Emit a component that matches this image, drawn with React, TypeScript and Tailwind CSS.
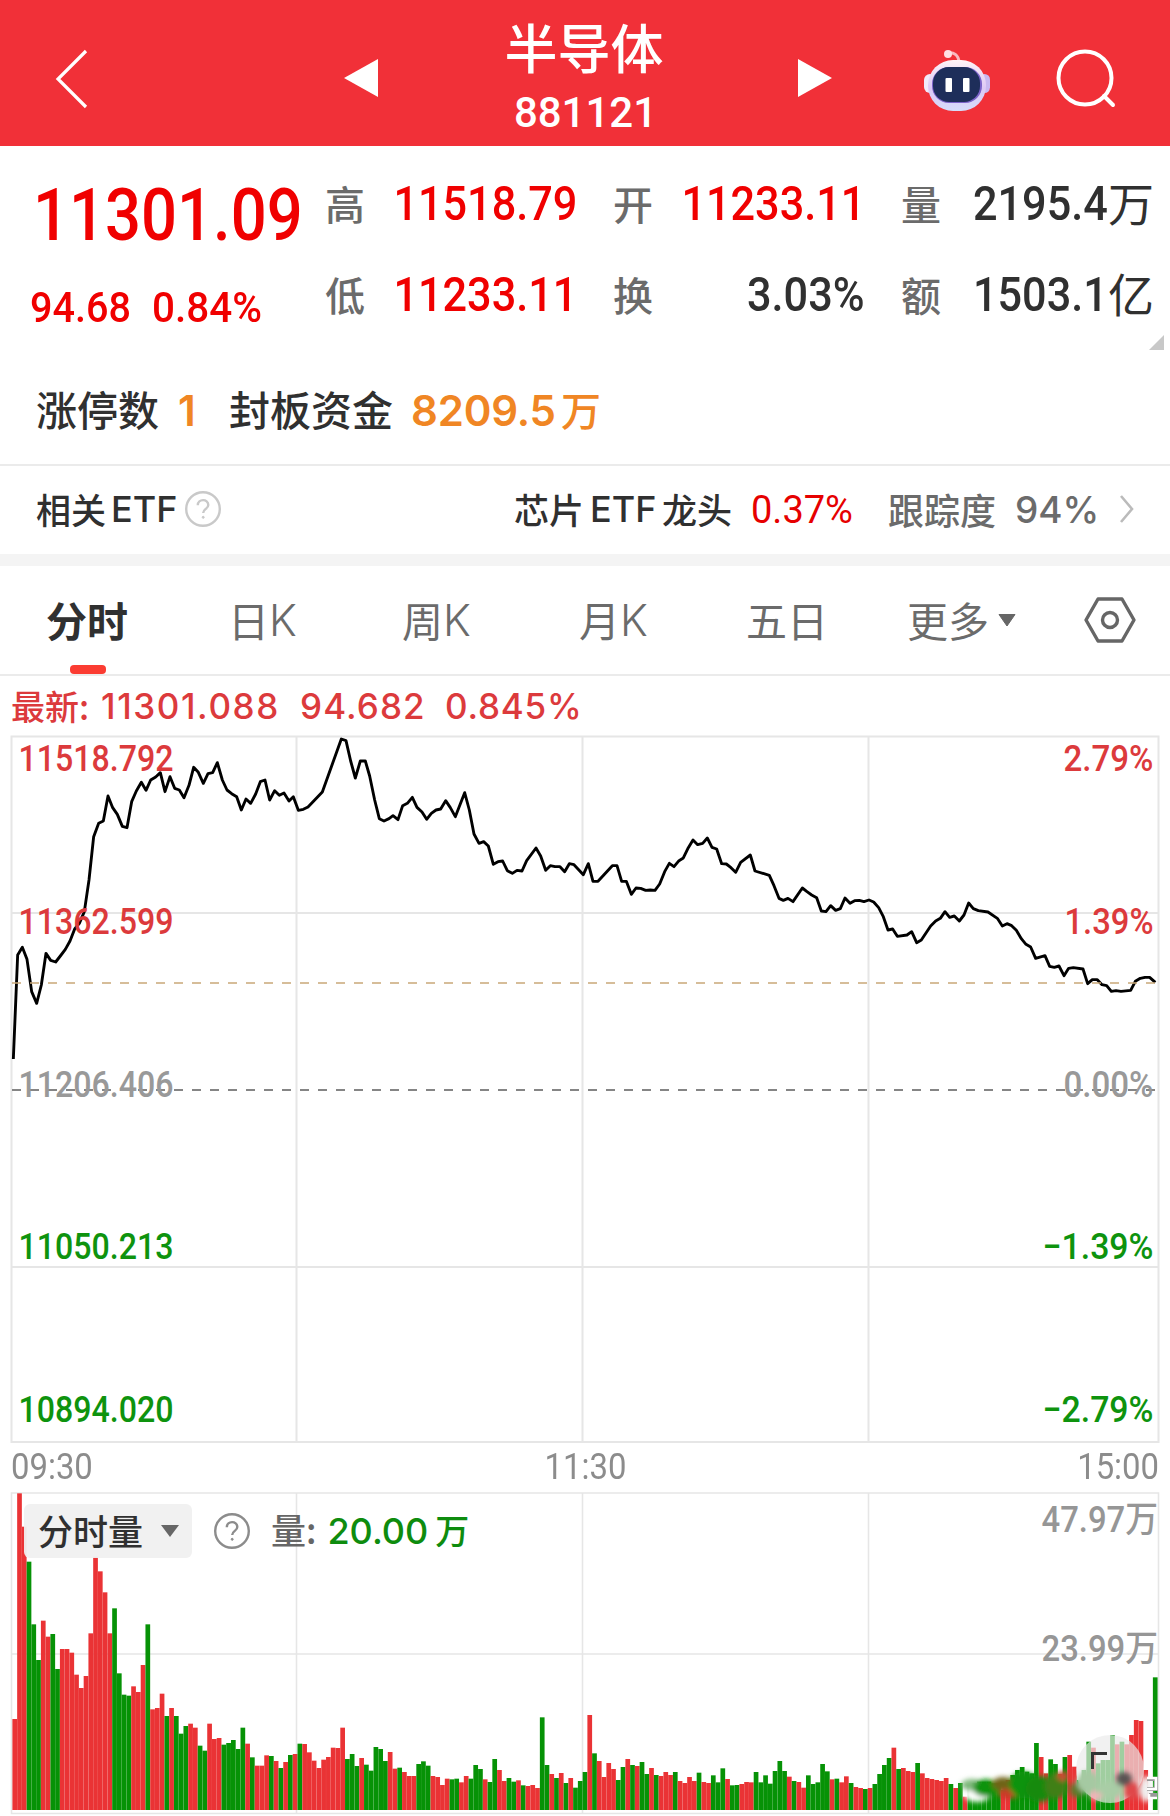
import React from "react";

const BARS =
  "717R 40R 140R 245G 433G 540G 422R 470R 462G 567G 507R 507R 518R 584R 624R 588R 460R 230R 274R 337R 460R 385G 580G 644G 647G 619R 636R 555R 433G 688R 684R 641R 708G 684R 708G 761G 738G 731R 743R 797G 812G 731R 777R 774R 794G 789G 780G 807G 743G 791R 832G 857R 857R 826R 828G 843R 864G 846R 825G 822R 791G 792R 817R 842R 864R 839R 831R 803R 804R 743R 837G 822G 858G 834R 854G 872G 801G 807G 843G 816R 866R 863G 876R 888R 888R 852G 844G 857G 888R 891R 915R 896R 898G 896G 907R 888R 896G 855G 867G 898R 906G 837G 870R 903R 894G 905G 901R 916G 918R 915R 924R 712G 855G 882R 894G 879R 909G 894R 923G 903G 876G 705R 820G 843R 891R 849R 867R 900G 861G 837R 855G 858R 846G 882G 864R 885G 888R 876R 885R 876G 903R 909R 891R 903R 878G 906R 909R 886G 907G 865G 897R 916G 915G 912R 906R 907R 876G 907G 886G 911G 873G 843G 873G 890R 903G 906R 923R 886G 912G 907G 852G 874G 898R 896G 907R 889R 909G 921R 924R 927G 924R 912G 882G 855G 834G 803R 867G 864R 873R 876R 849G 880R 894R 897R 900R 903R 894R 912G 924R 909G 950R 915G 910G 905G 905G 905G 910G 910G 930R 900R 885G 870G 861G 875G 880G 789G 831R 880R 838G 852G 882R 831G 825R 860R 900G 870G 785G 803R 850G 840G 840G 765G 793R 785G 793R 765R 720R 723R 870R 990R 592G"
    .split(" ")
    .map((s) => ({ top: parseInt(s, 10), up: s.endsWith("R") }));

const PRICE =
  "40,1017 53,705 67,682 81,718 95,815 110,850 124,795 138,700 152,721 167,726 181,708 196,688 210,663 224,627 238,610 253,575 267,480 281,350 296,310 310,303 324,228 338,263 352,283 367,319 381,323 395,245 409,213 424,187 438,211 452,180 467,171 481,158 495,215 510,170 524,205 538,210 552,233 567,196 581,142 595,157 610,190 624,161 638,158 652,128 667,180 681,210 695,221 710,230 724,270 738,237 752,250 767,222 781,185 795,180 809,240 824,212 838,226 852,219 867,243 880,230 895,271 910,268 924,261 967,216 1024,57 1038,62 1052,123 1066,174 1081,123 1096,123 1109,168 1124,240 1138,296 1152,303 1167,296 " +
  "1179,287 1194,299 1208,257 1222,250 1237,232 1251,262 1266,276 1280,298 1294,280 1308,270 1322,267 1337,242 1351,263 1366,290 1394,218 1408,270 1422,342 1437,370 1451,365 1465,378 1480,433 1494,425 1508,423 1522,452 1537,460 1551,451 1566,453 1580,422 1608,384 1622,408 1637,451 1651,437 1665,440 1680,440 1694,455 1708,431 1722,434 1750,464 1765,431 1779,484 1794,484 1837,437 1851,437 1865,484 1879,484 1894,523 1908,504 1922,505 1937,511 1951,510 1965,511 1979,492 1994,455 2008,430 2022,440 2037,422 2050,414 2065,383 2079,360 2093,374 2108,370 2122,354 2136,382 2150,387 2165,431 2179,432 2193,443 2207,457 2222,427 2251,405 2265,453 2308,466 2322,497 2337,535 " +
  "2350,541 2364,535 2379,545 2407,504 2421,515 2435,525 2450,533 2464,573 2478,575 2492,557 2507,571 2521,566 2535,534 2550,550 2564,542 2578,541 2592,545 2607,540 2621,546 2636,563 2650,590 2664,630 2678,627 2692,649 2721,645 2735,635 2750,668 2764,660 2792,618 2807,603 2821,595 2835,575 2849,592 2863,588 2878,603 2892,585 2906,549 2920,566 2935,572 2964,576 2992,595 3007,618 3021,611 3035,617 3049,631 3064,656 3078,673 3092,681 3107,715 3135,707 3149,739 3163,742 3177,738 3192,767 3206,745 3220,743 3249,747 3263,791 3277,779 3292,779 3306,794 3320,797 3334,814 3348,812 3363,814 3392,811 3406,784 3421,775 3435,772 3449,772 3466,787";

const LEVELS = [
  { y: 36, price: "11518.792", pct: "2.79%", w: 90, fill: "#dc3a3c" },
  { y: 198.5, price: "11362.599", pct: "1.39%", w: 89, fill: "#dc3a3c" },
  { y: 361.5, price: "11206.406", pct: "0.00%", w: 90, fill: "#999999" },
  { y: 524, price: "11050.213", pct: "−1.39%", w: 111, fill: "#0e930e" },
  { y: 687, price: "10894.020", pct: "−2.79%", w: 111, fill: "#0e930e" },
];

function Label({ children }: { children: string }) {
  return <span className="relative -top-px -ml-px w-[40px] shrink-0 text-[40px] leading-none font-medium text-[#6b6b6b]">{children}</span>;
}

function Stat({ children, unit, dark }: { children: string; unit?: string; dark?: boolean }) {
  return (
    <span
      className={`flex items-center justify-end whitespace-nowrap text-[48px] leading-none ${dark ? "text-[#303030]" : "text-[#f00000]"}`}
    >
      <span className="origin-right scale-x-[0.9] font-[Roboto] font-medium">{children}</span>
      {unit && <span className="relative -top-[3px] text-[46px]">{unit}</span>}
    </span>
  );
}

function Header() {
  return (
    <header className="flex h-[146px] items-center bg-[#f13038] text-white">
      <svg className="mt-[11px] ml-[51px] h-[70px] w-[40px]" viewBox="0 0 40 70" fill="none">
        <path d="M35 7L7 35L35 63" stroke="currentColor" strokeWidth="3.2" />
      </svg>
      <svg className="mt-[10px] ml-[253px] h-[38px] w-[34px]" viewBox="0 0 34 38">
        <path d="M34 0V38L0 19Z" fill="currentColor" />
      </svg>
      <div className="ml-[104px] flex w-[204px] flex-col items-center pt-[7px]">
        <h1 className="text-[53px] leading-[60px] font-medium">半导体</h1>
        <p className="mt-[12px] ml-[3px] font-[Roboto] text-[42px] leading-[50px] font-medium">881121</p>
      </div>
      <svg className="mt-[10px] ml-[112px] h-[38px] w-[34px]" viewBox="0 0 34 38">
        <path d="M0 0V38L34 19Z" fill="currentColor" />
      </svg>
      <svg className="mt-[8px] ml-[90px] h-[68px] w-[70px]" viewBox="0 0 70 68">
        <defs>
          <linearGradient id="shell" x1="0" y1="0" x2="0" y2="1">
            <stop offset="0" stopColor="#fff3f6" />
            <stop offset="0.55" stopColor="#ddc8f5" />
            <stop offset="1" stopColor="#d5dcfa" />
          </linearGradient>
        </defs>
        <path d="M26 10C32 9 36 12 37 18" stroke="#f9b9c0" strokeWidth="3" fill="none" />
        <circle cx="26" cy="11" r="4" fill="#ffdfe3" />
        <rect x="2" y="31" width="12" height="19" rx="6" fill="#f1eafa" />
        <rect x="57" y="31" width="11" height="19" rx="5.5" fill="#c9b8f0" />
        <rect x="6" y="17" width="58" height="51" rx="25" fill="url(#shell)" />
        <rect x="10" y="24" width="50" height="36" rx="17" fill="#7a62c8" />
        <rect x="11" y="24" width="47" height="35" rx="16" fill="#1e2e5a" />
        <rect x="23.5" y="35" width="6.5" height="14" rx="1" fill="#fff" />
        <rect x="41" y="35" width="6.5" height="14" rx="1" fill="#fff" />
      </svg>
      <svg className="mt-[11px] ml-[62px] h-[64px] w-[64px]" viewBox="0 0 64 64" fill="none" stroke="currentColor" strokeWidth="4">
        <circle cx="31" cy="31" r="26.5" />
        <path d="M50 49L59 58" strokeLinecap="round" />
      </svg>
    </header>
  );
}

function Quote() {
  return (
    <section className="relative flex h-[210px]">
      <div className="w-[326px] shrink-0 text-[#f00000]">
        <div className="mt-[34px] ml-[33px] h-[72px] w-[280px] origin-left scale-x-[0.88] font-[Roboto] text-[72px] leading-[72px] font-medium">
          11301.09
        </div>
        <div className="mt-[28px] ml-[30px] flex font-[Roboto] text-[43px] leading-[55px] font-medium">
          <span className="w-[122px] origin-left scale-x-[0.92]">94.68</span>
          <span className="origin-left scale-x-[0.94]">0.84%</span>
        </div>
      </div>
      <div className="mt-[31px] grid h-[144px] grid-cols-[251px_251px_252px] grid-rows-[54px_54px] gap-x-[37px] gap-y-[37px]">
        <div className="flex items-center justify-between"><Label>高</Label><Stat>11518.79</Stat></div>
        <div className="flex items-center justify-between"><Label>开</Label><Stat>11233.11</Stat></div>
        <div className="flex items-center justify-between"><Label>量</Label><Stat dark unit="万">2195.4</Stat></div>
        <div className="flex items-center justify-between"><Label>低</Label><Stat>11233.11</Stat></div>
        <div className="flex items-center justify-between"><Label>换</Label><Stat dark>3.03%</Stat></div>
        <div className="flex items-center justify-between"><Label>额</Label><Stat dark unit="亿">1503.1</Stat></div>
      </div>
      <svg className="absolute right-[6px] bottom-[6px] h-[15px] w-[15px]" viewBox="0 0 15 15">
        <path d="M15 0V15H0Z" fill="#c8c8c8" />
      </svg>
    </section>
  );
}

function Tab({ width, children }: { width: string; children: React.ReactNode }) {
  return <div className={`flex shrink-0 items-center ${width}`}>{children}</div>;
}

function K() {
  return <span className="font-[Inter] text-[43px] font-light">K</span>;
}

function PriceChart() {
  return (
    <svg className="block h-[715px] w-[1170px]" viewBox="0 0 1170 715" fontFamily="Roboto">
      <g stroke="#e6e6e6" strokeWidth="2" fill="none">
        <path d="M11.5 1.5H1158.5V707H11.5Z" />
        <path d="M11.5 178H1158.5M11.5 532H1158.5M296.5 1.5V707M582.5 1.5V707M868.5 1.5V707" />
      </g>
      <path d="M12 355H1155" stroke="#858585" strokeWidth="2" strokeDasharray="9 9" />
      <g transform="translate(0 -15) scale(0.33333)">
        <polyline points={PRICE} fill="none" stroke="#000" strokeWidth="8.6" strokeLinejoin="round" />
      </g>
      <path d="M12 248H1155" stroke="#c9a878" strokeWidth="1.6" strokeDasharray="9 9" />
      {LEVELS.map((l) => (
        <g key={l.price} fill={l.fill} fontSize="36.5" fontWeight="500">
          <text x="18.5" y={l.y} textLength="155" lengthAdjust="spacingAndGlyphs">{l.price}</text>
          <text x={1153.5 - l.w} y={l.y} textLength={l.w} lengthAdjust="spacingAndGlyphs">{l.pct}</text>
        </g>
      ))}
    </svg>
  );
}

function VolumeChart() {
  return (
    <div className="relative h-[324px]">
      <svg className="block h-[324px] w-[1170px]" viewBox="0 0 1170 324">
        <defs>
          <filter id="smudge" x="-10%" y="-30%" width="120%" height="160%"><feGaussianBlur stdDeviation="2.6" /></filter>
        </defs>
        <path
          d="M11.5 1H1158.5V321.5H11.5ZM11.5 162H1158.5M296.5 1V321.5M582.5 1V321.5M868.5 1V321.5"
          stroke="#e6e6e6"
          strokeWidth="1.6"
          fill="none"
        />
        {BARS.map((b, i) => (
          <rect key={i} x={12.4 + i * 4.752} y={(b.top - 36) / 3} width="4.7" height={(990 - b.top) / 3} fill={b.up ? "#ea3335" : "#069206"} />
        ))}
        <g fontFamily="Roboto, 'Noto Sans CJK SC'" fontSize="36" fontWeight="500" fill="#969696">
          <text x="1041.5" y="39.5" textLength="116.5" lengthAdjust="spacingAndGlyphs">47.97万</text>
          <text x="1041.5" y="168.5" textLength="116.5" lengthAdjust="spacingAndGlyphs">23.99万</text>
        </g>
        <circle cx="1110" cy="277" r="34" fill="#eaeaea" fillOpacity="0.68" />
        <g filter="url(#smudge)">
          <ellipse cx="977" cy="302" rx="13" ry="8" fill="#fff" />
          <ellipse cx="972" cy="293" rx="11" ry="6" fill="#7fb97c" />
          <ellipse cx="986" cy="296" rx="13" ry="9" fill="#0c930c" />
          <ellipse cx="1003" cy="292" rx="11" ry="7" fill="#6f6319" />
          <ellipse cx="1008" cy="302" rx="9" ry="5" fill="#c93a26" />
          <ellipse cx="1024" cy="293" rx="15" ry="13" fill="#0c930c" />
          <ellipse cx="1040" cy="297" rx="14" ry="13" fill="#178a10" />
          <ellipse cx="1056" cy="294" rx="11" ry="13" fill="#3f7f18" />
          <ellipse cx="1063" cy="284" rx="6" ry="5" fill="#c94a30" />
          <ellipse cx="1077" cy="298" rx="7" ry="8" fill="#5d7a2a" />
          <ellipse cx="1088" cy="290" rx="11" ry="11" fill="#a5c9a2" />
          <ellipse cx="1110" cy="298" rx="13" ry="9" fill="#a9cda6" />
          <ellipse cx="1096" cy="304" rx="6" ry="4" fill="#f0b4b8" />
          <ellipse cx="1132" cy="299" rx="8" ry="9" fill="#e04648" />
          <ellipse cx="1124" cy="287" rx="8" ry="7" fill="#5a5252" />
          <ellipse cx="1146" cy="297" rx="6" ry="13" fill="#f1f1f1" />
        </g>
        <path d="M1092.5 277V261.5H1107" stroke="#333" strokeWidth="3" fill="none" />
        <path d="M1147 287H1156V297H1147M1149 303H1157" stroke="#999" strokeWidth="4" fill="none" />
        <path d="M1147 286H1156V297H1147M1149 302V306H1157" stroke="#fff" strokeWidth="2.6" fill="none" />
      </svg>
      <div className="absolute top-[12px] left-[24px] flex h-[54px] items-center">
        <div className="flex h-[54px] w-[168px] items-center rounded-[6px] bg-[#f0f0f0]/95 pb-[2px] pl-[14px] text-[35px] font-medium text-[#303030]">
          分时量
          <svg className="mt-[2px] ml-[18px] h-[12px] w-[18px]" viewBox="0 0 18 12"><path d="M0 0H18L9 12Z" fill="#666" /></svg>
        </div>
        <Help className="ml-[21px] h-[38px] w-[38px] text-[#8c8c8c]" />
        <span className="ml-[20px] pb-[3px] text-[35px] font-medium text-[#666]">量:</span>
        <span className="ml-[11px] font-[Inter] text-[36px] font-medium text-[#0e8c0e]">20.00</span>
        <span className="ml-[7px] pb-[3px] text-[34px] font-medium text-[#0e8c0e]">万</span>
      </div>
    </div>
  );
}

function Help({ className }: { className: string }) {
  return (
    <svg className={className} viewBox="0 0 38 38" fill="none" stroke="currentColor" strokeWidth="2.4">
      <circle cx="19" cy="19" r="16.8" />
      <path d="M13.8 15.3C13.8 8.5 24.3 8.5 24.3 15C24.3 19 19.2 18.8 19.2 23" />
      <circle cx="19.2" cy="27.3" r="1" fill="currentColor" strokeWidth="1" />
    </svg>
  );
}

export default function App() {
  return (
    <main className="h-[1816px] w-[1170px] overflow-hidden bg-white font-['Noto_Sans_CJK_SC',sans-serif]">
      <Header />
      <Quote />
      <section className="flex h-[108px] items-center pl-[36px] text-[41px] font-medium whitespace-nowrap text-[#303030]">
        <span className="w-[142px] pb-[2px]">涨停数</span>
        <span className="w-[51px] font-[Inter] text-[42px] font-semibold text-[#f08624]">1</span>
        <span className="w-[182px] pb-[2px]">封板资金</span>
        <span className="w-[150px] font-[Inter] text-[42px] font-semibold tracking-[-0.2px] text-[#f08624]">8209.5</span>
        <span className="pb-[2px] text-[40px] text-[#f08624]">万</span>
      </section>
      <section className="flex h-[90px] items-center border-t-2 border-[#ebebeb] pb-[2px] pl-[36px] text-[35px] font-medium whitespace-nowrap text-[#303030]">
        <span className="w-[75px]">相关</span>
        <span className="w-[73px] font-[Inter] text-[36px]">ETF</span>
        <Help className="h-[38px] w-[38px] text-[#c9c9c9]" />
        <span className="ml-[292px] w-[76px]">芯片</span>
        <span className="w-[72px] font-[Inter] text-[36px]">ETF</span>
        <span className="w-[89px]">龙头</span>
        <span className="w-[137px] pt-[2px] font-[Roboto] text-[38px] font-normal text-[#e60000]">0.37%</span>
        <span className="w-[127px] text-[36px] text-[#6b6b6b]">跟踪度</span>
        <span className="w-[104px] pt-[1px] font-[Inter] text-[37px] text-[#6b6b6b]">94%</span>
        <svg className="h-[32px] w-[16px]" viewBox="0 0 16 32" fill="none"><path d="M2 3L13 16L2 29" stroke="#bbb" strokeWidth="2.6" /></svg>
      </section>
      <div className="h-[12px] bg-[#f4f4f4]" />
      <nav className="relative flex h-[110px] items-center border-b-2 border-[#ebebeb] pl-[46px] text-[41px] whitespace-nowrap text-[#6b6b6b]">
        <Tab width="w-[182px]"><span className="text-[41px] font-bold text-[#303030]">分时</span></Tab>
        <Tab width="w-[174px]">日<K /></Tab>
        <Tab width="w-[177px]">周<K /></Tab>
        <Tab width="w-[167px]">月<K /></Tab>
        <Tab width="w-[161px]">五日</Tab>
        <Tab width="w-[176px]">
          更多
          <svg className="ml-[9px] h-[13px] w-[18px]" viewBox="0 0 18 13"><path d="M1 .5H17L9 12Z" fill="#666" stroke="#666" strokeLinejoin="round" /></svg>
        </Tab>
        <svg className="h-[50px] w-[54px]" viewBox="0 0 54 50" fill="none" stroke="#666" strokeWidth="3.4">
          <path d="M15 4H39L51 25L39 46H15L3 25Z" strokeLinejoin="round" />
          <circle cx="27" cy="25" r="7.5" />
        </svg>
        <span className="absolute bottom-0 left-[70px] h-[9px] w-[36px] rounded-[4px] bg-[#fb3c32]" />
      </nav>
      <div className="flex h-[59px] items-center pl-[11px] text-[34px] font-medium whitespace-nowrap text-[#dc3a3c]">
        <span className="w-[90px]">最新:</span>
        <span className="w-[199px] pt-[2px] font-[Inter] text-[35px] tracking-[1.6px]">11301.088</span>
        <span className="w-[145px] pt-[2px] font-[Inter] text-[35px] tracking-[1.1px]">94.682</span>
        <span className="pt-[2px] font-[Inter] text-[35px] tracking-[0.8px]">0.845%</span>
      </div>
      <PriceChart />
      <div className="flex h-[42px] items-center justify-between px-[11px] pb-[7px] font-[Roboto] text-[36.5px] text-[#8c8c8c]">
        <span className="w-[90px] origin-left scale-x-[0.9]">09:30</span>
        <span className="w-[90px] pr-[3px] text-center">
          <span className="inline-block scale-x-[0.9]">11:30</span>
        </span>
        <span className="flex w-[90px] origin-right scale-x-[0.9] justify-end">15:00</span>
      </div>
      <VolumeChart />
    </main>
  );
}
